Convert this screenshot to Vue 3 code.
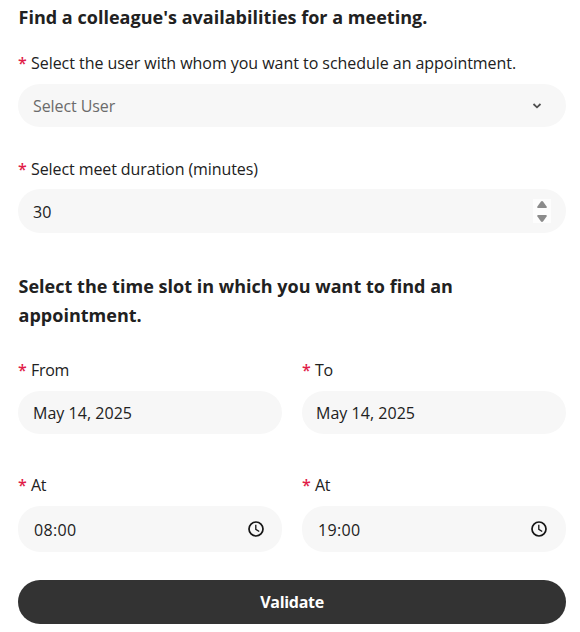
<script setup>
import { ref } from 'vue'

const duration = ref(30)
const slots = [
  { id: 'from', label: 'From', date: 'May 14, 2025', time: '08:00' },
  { id: 'to', label: 'To', date: 'May 14, 2025', time: '19:00' },
]
</script>

<template>
  <form class="form" @submit.prevent>
    <h2 class="heading first">Find a colleague's availabilities for a meeting.</h2>

    <div class="label"><span class="star">*</span><span class="user-label">Select the user with whom you want to schedule an appointment.</span></div>
    <div class="field select">
      <span class="placeholder">Select User</span>
      <svg class="chevron" width="10" height="6" viewBox="0 0 10 6"><path d="M1.5 1 L5 4.3 L8.5 1" /></svg>
    </div>

    <div class="label second"><span class="star">*</span><span class="duration-label">Select meet duration (minutes)</span></div>
    <div class="field number">
      <span class="digits">{{ duration }}</span>
      <span class="spinner">
        <svg width="18" height="24" viewBox="0 0 18 24">
          <path d="M9 2 Q9.6 2 10.2 2.7 L13.6 7.5 Q14.3 9 13 9 H5 Q3.7 9 4.4 7.5 L7.8 2.7 Q8.4 2 9 2Z" />
          <path d="M9 23 Q9.6 23 10.2 22.3 L13.6 17.5 Q14.3 16 13 16 H5 Q3.7 16 4.4 17.5 L7.8 22.3 Q8.4 23 9 23Z" />
        </svg>
      </span>
    </div>

    <h2 class="heading slot">Select the time slot in which you want to find an<br>appointment.</h2>

    <div class="columns">
      <div v-for="slot in slots" :key="slot.id" class="column">
        <div class="label"><span class="star">*</span><span class="short">{{ slot.label }}</span></div>
        <div class="field date-field"><span class="date">{{ slot.date }}</span></div>
        <div class="label at"><span class="star">*</span><span class="short">At</span></div>
        <div class="field time">
          <span class="digits">{{ slot.time }}</span>
          <svg class="clock" width="16" height="16" viewBox="0 0 16 16">
            <circle cx="8" cy="8" r="7" />
            <path d="M7.8 3.8 V8.3 L11.2 10.5" />
          </svg>
        </div>
      </div>
    </div>

    <button class="submit" type="submit">Validate</button>
  </form>
</template>

<style>
body {
  margin: 0;
  background: #fff;
}
</style>

<style scoped>
.form {
  box-sizing: border-box;
  width: 580px;
  height: 632px;
  padding: 3px 14px 0 18px;
  color: #212121;
  font: 16px/24px "Open Sans", "Noto Sans", sans-serif;
}
.heading {
  margin: 0;
  padding-left: 0.5px;
  font-size: 18px;
  font-weight: 700;
  line-height: 29px;
  letter-spacing: 0.02px;
  white-space: nowrap;
}
.label {
  display: flex;
  height: 24px;
  white-space: nowrap;
}
.first + .label {
  margin-top: 19px;
}
.star {
  flex: none;
  width: 13px;
  color: #e11d48;
  font-weight: 600;
}
.user-label {
  letter-spacing: -0.045px;
}
.duration-label {
  letter-spacing: -0.09px;
}
.short {
  letter-spacing: -0.3px;
}
.field {
  display: flex;
  align-items: center;
  justify-content: space-between;
  box-sizing: border-box;
  height: 43px;
  margin-top: 9px;
  padding: 0 15px;
  border-radius: 22px;
  background: #f7f7f7;
}
.placeholder {
  color: #6b6b6b;
  letter-spacing: -0.08px;
}
.chevron {
  margin-right: 9px;
  fill: none;
  stroke: #505050;
  stroke-width: 1.8;
}
.second {
  margin-top: 30px;
}
.number {
  height: 44px;
  margin-top: 8px;
}
.digits {
  padding-top: 2px;
}
.date {
  letter-spacing: 0.03px;
}
.time .digits {
  letter-spacing: 0.35px;
}
.spinner {
  display: flex;
  width: 18px;
  height: 24px;
  background: #fdfdfd;
  fill: #8b8b8b;
}
.slot {
  margin-top: 39px;
}
.columns {
  display: grid;
  grid-template-columns: 264px 264px;
  gap: 20px;
  margin-top: 28px;
}
.at {
  margin-top: 39px;
}
.time {
  height: 46px;
  padding: 0 18px 0 16px;
}
.column + .column .date-field {
  padding-left: 14px;
}
.column + .column .time {
  padding-right: 19px;
}
.clock {
  fill: none;
  stroke: #151515;
  stroke-width: 1.7;
}
.clock path {
  stroke-width: 1.3;
}
.submit {
  display: block;
  width: 100%;
  height: 44px;
  margin-top: 28px;
  padding: 0;
  border: 0;
  border-radius: 22px;
  background: #333;
  color: #fff;
  font: 700 16px/24px "Open Sans", "Noto Sans", sans-serif;
  letter-spacing: -0.3px;
}
</style>
